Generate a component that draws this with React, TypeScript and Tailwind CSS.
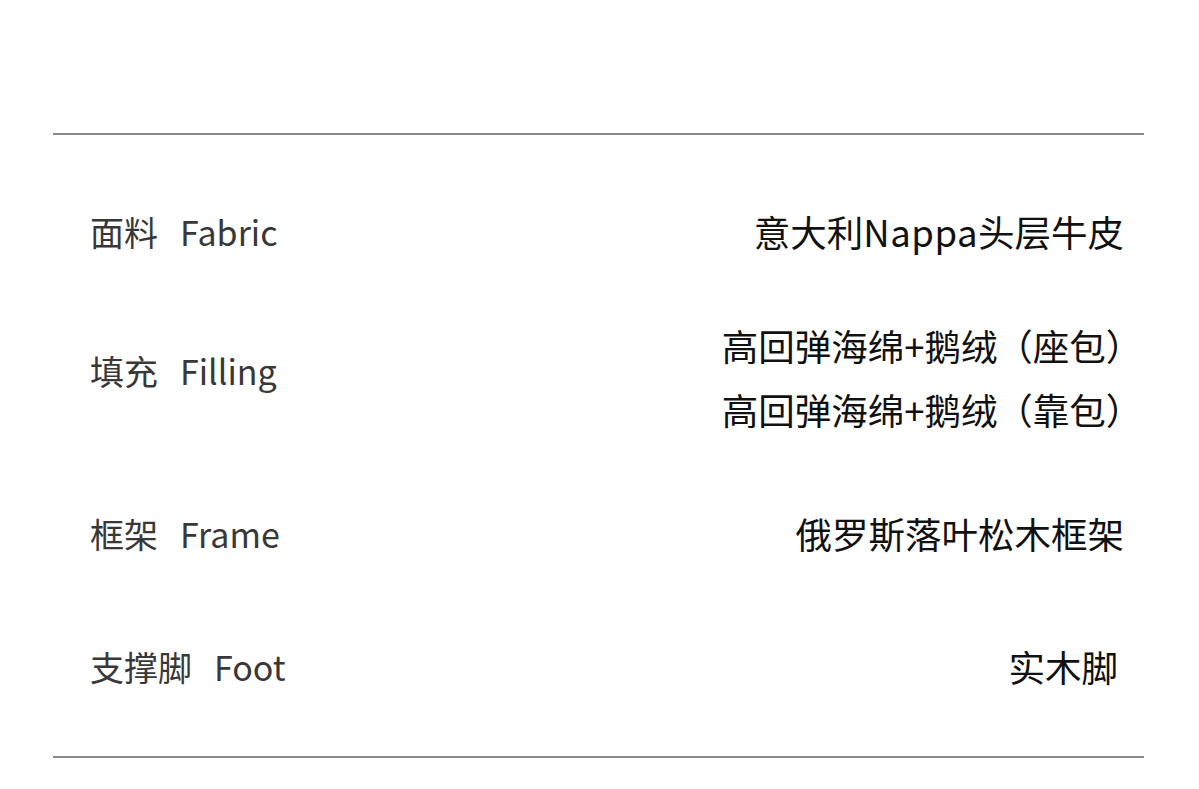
export default function App() {
  const font = { fontFamily: '"Noto Sans CJK SC", "Noto Sans", sans-serif' };
  return (
    <div className="w-[1199px] h-[789px] bg-white" style={font}>
      <div className="ml-[53px] mr-[55px] pt-[133px] flex flex-col">
        <div className="h-[2px] bg-[#8a8a8a]" />
        <div className="flex flex-col pl-[37px] pr-[20px] pt-[57px] pb-[49px] gap-[42px]">
          <div className="flex items-center justify-between h-[80px]">
            <span className="text-[34px] text-[#383838] leading-none">
              面料<span className="ml-[22px]">Fabric</span>
            </span>
            <span className="text-[36.5px] text-[#111111] leading-none">
              意大利<span className="tracking-[0.5px]">Nappa</span>头层牛皮
            </span>
          </div>
          <div className="flex items-center justify-between h-[126px]">
            <span className="text-[34px] text-[#383838] leading-none pb-[12px]">
              填充<span className="ml-[22px]">Filling</span>
            </span>
            <div className="flex flex-col items-end text-[36.5px] text-[#111111] leading-[64px] pt-[2px]">
              <span>
                高回弹海绵+鹅绒<span className="ml-[17px] [font-feature-settings:'halt']">（</span>座包<span className="[font-feature-settings:'halt']">）</span>
              </span>
              <span>
                高回弹海绵+鹅绒<span className="ml-[17px] [font-feature-settings:'halt']">（</span>靠包<span className="[font-feature-settings:'halt']">）</span>
              </span>
            </div>
          </div>
          <div className="flex items-center justify-between h-[80px] mt-[12px]">
            <span className="text-[34px] text-[#383838] leading-none">
              框架<span className="ml-[22px]">Frame</span>
            </span>
            <span className="text-[36.5px] text-[#111111] leading-none">俄罗斯落叶松木框架</span>
          </div>
          <div className="flex items-center justify-between h-[80px] mt-[11px]">
            <span className="text-[34px] text-[#383838] leading-none">
              支撑脚<span className="ml-[22px]">Foot</span>
            </span>
            <span className="text-[36.5px] text-[#111111] leading-none pr-[6px]">实木脚</span>
          </div>
        </div>
        <div className="h-[2px] bg-[#8a8a8a]" />
      </div>
    </div>
  );
}
